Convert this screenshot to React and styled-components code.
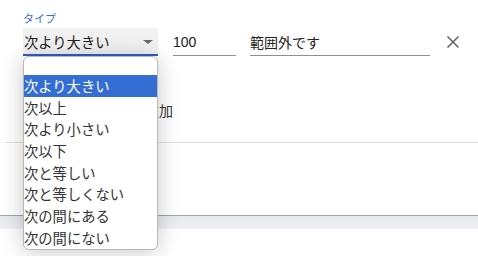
import React from 'react';
import styled, { createGlobalStyle } from 'styled-components';

const GlobalStyle = createGlobalStyle`
  html, body {
    margin: 0;
    padding: 0;
    background: #ffffff;
    font-family: "Noto Sans CJK JP", "Liberation Sans", sans-serif;
  }
`;

const Page = styled.div`
  width: 478px;
  height: 256px;
  position: relative;
  overflow: hidden;
  background: #ffffff;
`;

const Card = styled.div`
  height: 216px;
  background: #ffffff;
  border-bottom: 1px solid #a4a4a4;
  box-sizing: border-box;
  padding-top: 10px;
`;

const Band = styled.div`
  height: 13px;
  background: linear-gradient(#e6e8ec, #eff1f4);
`;

const Row = styled.div`
  display: flex;
  align-items: flex-end;
  padding: 0 0 0 23px;
  height: 46px;
`;

const Field = styled.div`
  display: flex;
  flex-direction: column;
  width: ${p => p.$w}px;
  margin-right: ${p => p.$mr || 0}px;
`;

const Label = styled.div`
  font-size: 11px;
  line-height: 14px;
  color: #3d6bd4;
  margin-bottom: 3px;
`;

const SelectBox = styled.div`
  height: 26px;
  background: #f1f1f1;
  border-bottom: 2px solid #2f5dc8;
  display: flex;
  align-items: center;
  justify-content: space-between;
  padding: 0 5px 0 1px;
  font-size: 14.3px;
  color: #222;
`;

const Arrow = styled.span`
  width: 0;
  height: 0;
  border-left: 5px solid transparent;
  border-right: 5px solid transparent;
  border-top: 4px solid #6a6a6a;
  margin-top: 2px;
`;

const Input = styled.div`
  height: 27px;
  border-bottom: 1px solid #8f8f8f;
  display: flex;
  align-items: center;
  font-size: 14px;
  font-family: ${p => (p.$num ? '"Liberation Sans", Arial, sans-serif' : '"Noto Sans CJK JP", sans-serif')};
  color: #222;
`;

const Close = styled.button`
  border: 0;
  background: none;
  padding: 0;
  margin-left: 16px;
  margin-bottom: 7px;
  width: 14px;
  height: 14px;
  display: flex;
`;

const AddRow = styled.div`
  display: flex;
  padding-left: 103px;
  margin-top: 44px;
  font-size: 14px;
  color: #333;
`;

const Divider = styled.div`
  margin: 22px 0 0 5px;
  height: 1px;
  background: #e0e0e0;
`;

const Menu = styled.ul`
  position: absolute;
  left: 23px;
  top: 56px;
  width: 135px;
  height: 194px;
  margin: 0;
  padding: 0;
  list-style: none;
  background: #fff;
  border-radius: 6px;
  border: 1px solid #b8b8b8;
  box-sizing: border-box;
  box-shadow: 0 2px 22px rgba(0, 0, 0, 0.22);
  overflow: hidden;
`;

const Option = styled.li`
  height: ${p => (p.$blank ? 18 : 21.7)}px;
  line-height: 21.7px;
  font-size: 14.3px;
  white-space: nowrap;
  color: ${p => (p.$active ? '#fff' : '#333')};
  background: ${p => (p.$active ? '#346dd3' : 'transparent')};
`;

const options = [
  '次より大きい',
  '次以上',
  '次より小さい',
  '次以下',
  '次と等しい',
  '次と等しくない',
  '次の間にある',
  '次の間にない',
];

export default function App() {
  return (
    <Page>
      <GlobalStyle />
      <Card>
        <Row>
          <Field $w={135} $mr={15}>
            <Label>タイプ</Label>
            <SelectBox>
              <span>次より大きい</span>
              <Arrow />
            </SelectBox>
          </Field>
          <Field $w={63} $mr={14}>
            <Input $num>100</Input>
          </Field>
          <Field $w={180}>
            <Input>範囲外です</Input>
          </Field>
          <Close aria-label="削除">
            <svg width="14" height="14" viewBox="0 0 14 14">
              <path d="M1.5 1.5L12.5 12.5M12.5 1.5L1.5 12.5" stroke="#666" strokeWidth="1.6" fill="none" />
            </svg>
          </Close>
        </Row>
        <AddRow>条件を追加</AddRow>
        <Divider />
      </Card>
      <Band />
      <Menu>
        <Option $blank />
        {options.map((o, i) => (
          <Option key={o} $active={i === 0}>{o}</Option>
        ))}
      </Menu>
    </Page>
  );
}
